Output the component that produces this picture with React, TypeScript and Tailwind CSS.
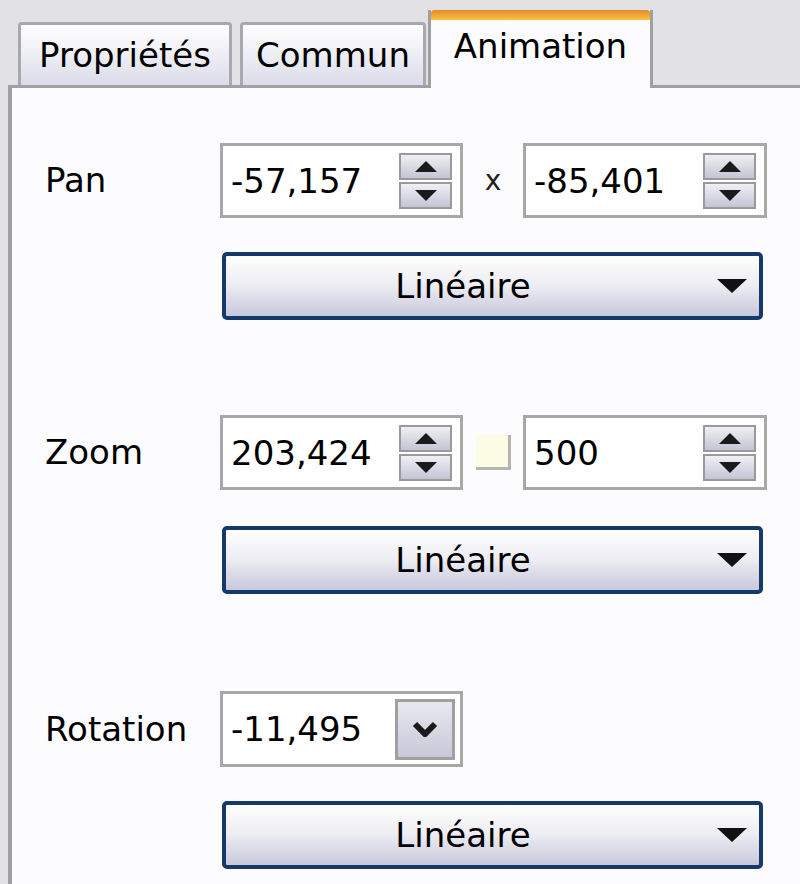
import React from "react";

const font = { fontFamily: '"DejaVu Sans", Tahoma, sans-serif' };

function Arrow({ up }: { up?: boolean }) {
  return (
    <svg width="22" height="11" viewBox="0 0 22 11" className="block">
      {up ? (
        <polygon points="11,0 22,11 0,11" fill="#1a1a1a" />
      ) : (
        <polygon points="0,0 22,0 11,11" fill="#1a1a1a" />
      )}
    </svg>
  );
}

function Spin() {
  return (
    <div className="flex w-[53px] flex-col gap-[2px]">
      <div className="flex h-[27px] items-center justify-center border-2 border-[#9a9a9a] bg-gradient-to-b from-[#f0f0f4] to-[#c4c4d4]">
        <Arrow up />
      </div>
      <div className="flex h-[27px] items-center justify-center border-2 border-[#9a9a9a] bg-gradient-to-b from-[#f0f0f4] to-[#c4c4d4]">
        <Arrow />
      </div>
    </div>
  );
}

function NumberBox({ value, w = "w-[243px]" }: { value: string; w?: string }) {
  return (
    <div className={`${w} flex h-[75px] items-center justify-between border-[3px] border-[#a8a8a8] bg-white pl-[8px] pr-[8px]`}>
      <span className="text-[34px] leading-none text-black">{value}</span>
      <Spin />
    </div>
  );
}

function Combo() {
  return (
    <div className="flex h-[68px] w-[541px] items-center rounded-[5px] border-4 border-[#15396b] bg-gradient-to-b from-white via-[#ececf2] to-[#c8c8dc] pr-[12px]">
      <span className="flex-1 pr-[17px] text-center text-[34px] leading-none text-black">Linéaire</span>
      <svg width="30" height="14" viewBox="0 0 30 14" className="block">
        <polygon points="0,0 30,0 15,14" fill="#111" />
      </svg>
    </div>
  );
}

export default function App() {
  return (
    <div style={font} className="h-[884px] w-[800px] overflow-hidden bg-[#e2e2e4]">
      {/* tabs */}
      <div className="flex h-[85px] items-end pl-[18px]">
        <div className="flex h-[63px] w-[214px] items-center justify-center rounded-t-[4px] border-x-[3px] border-t-[3px] border-[#a8a8b0] bg-gradient-to-b from-white to-[#dcdcea] text-[34px] text-black">
          Propriétés
        </div>
        <div className="ml-[8px] flex h-[63px] w-[186px] items-center justify-center rounded-t-[4px] border-x-[3px] border-t-[3px] border-[#a8a8b0] bg-gradient-to-b from-white to-[#dcdcea] text-[34px] text-black">
          Commun
        </div>
        <div className="relative z-10 ml-[2px] -mb-[3px] flex h-[78px] w-[225px] flex-col border-x-[3px] border-[#a0a0a0] bg-[#fcfcfe]">
          <div className="h-[10px] rounded-t-[3px] bg-gradient-to-b from-[#e08a30] to-[#fcc43c]" />
          <div className="flex flex-1 justify-center pt-[4px] text-[34px] leading-[44px] text-black">Animation</div>
        </div>
      </div>

      {/* panel */}
      <div className="ml-[8px] h-[800px] border-l-[4px] border-t-[3px] border-[#a0a0a4] bg-[#fcfcfe] pl-[33px] pt-[55px]">
        {/* Pan */}
        <div className="flex items-center">
          <span className="w-[175px] text-[34px] text-black">Pan</span>
          <NumberBox value="-57,157" />
          <span className="flex w-[60px] justify-center text-[28px] text-[#222]">x</span>
          <NumberBox value="-85,401" w="w-[244px]" />
        </div>
        <div className="ml-[177px] mt-[34px]">
          <Combo />
        </div>

        {/* Zoom */}
        <div className="mt-[95px] flex items-center">
          <span className="w-[175px] text-[34px] text-black">Zoom</span>
          <NumberBox value="203,424" />
          <div className="flex w-[60px] justify-center">
            <div className="h-[35px] w-[35px] border-b-[3px] border-r-[3px] border-[#b4b4b0] bg-[#fcfce4]" />
          </div>
          <NumberBox value="500" w="w-[244px]" />
        </div>
        <div className="ml-[177px] mt-[36px]">
          <Combo />
        </div>

        {/* Rotation */}
        <div className="mt-[97px] flex items-center">
          <span className="w-[175px] text-[34px] text-black">Rotation</span>
          <div className="flex h-[76px] w-[243px] items-center justify-between border-[3px] border-[#a8a8a8] bg-white pl-[8px] pr-[5px]">
            <span className="text-[34px] leading-none text-black">-11,495</span>
            <div className="flex h-[61px] w-[60px] items-center justify-center border-[3px] border-[#a0a0a0] bg-gradient-to-b from-[#e8e8f0] to-[#c8c8d8]">
              <svg width="26" height="16" viewBox="0 0 26 16" className="block">
                <polyline points="3,3 13,13 23,3" fill="none" stroke="#1a1a1a" strokeWidth="6" />
              </svg>
            </div>
          </div>
        </div>
        <div className="ml-[177px] mt-[34px]">
          <Combo />
        </div>
      </div>
    </div>
  );
}
